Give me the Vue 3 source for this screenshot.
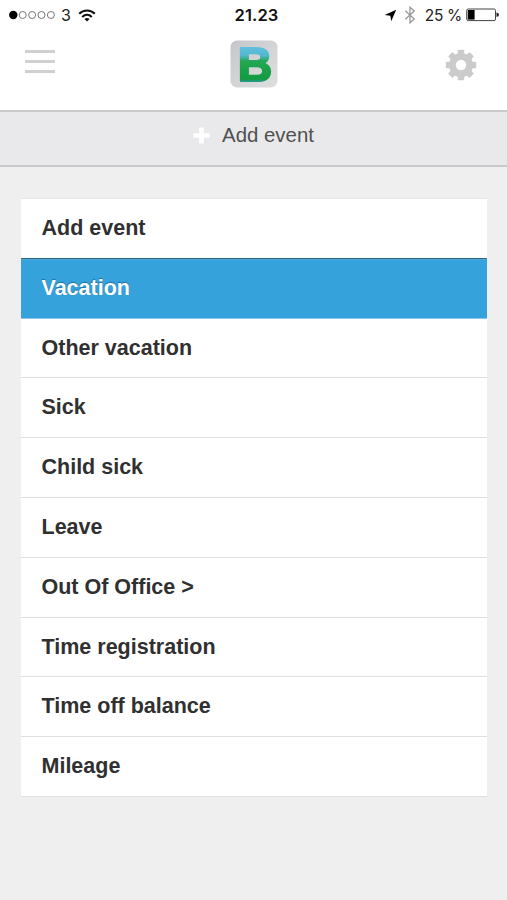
<template>
  <div class="screen">
    <div class="status-bar">
      <div class="status-left">
        <svg class="signal" width="46" height="10" viewBox="0 0 46 10">
          <circle cx="4.3" cy="5" r="4.2" fill="#000" />
          <circle v-for="n in 4" :key="n" :cx="4.3 + n * 9.4" cy="5" r="3.5" fill="none" stroke="#777" stroke-width="1" />
        </svg>
        <span class="carrier">3</span>
        <svg class="wifi" width="18" height="13" viewBox="0 0 18 13" fill="none" stroke="#111" stroke-width="2.1">
          <path d="M1.2 4.8 C5.5 0.3 12.5 0.3 16.8 4.8" />
          <path d="M4.2 8 C7 5.2 11 5.2 13.8 8" />
          <path d="M9 12.6 L6.4 9.9 Q9 7.9 11.6 9.9 Z" fill="#111" stroke="none" />
        </svg>
      </div>
      <span class="clock">21.23</span>
      <div class="status-right">
        <svg class="location" width="13" height="13" viewBox="0 0 13 13">
          <path d="M12.2 0.8 L7.2 12.2 L6.4 6.7 L0.7 5.9 Z" fill="#000" />
        </svg>
        <svg class="bluetooth" width="12" height="18" viewBox="0 0 12 18" fill="none" stroke="#999" stroke-width="1.3">
          <path d="M1.3 4.8 L10.2 13 L6 16.8 V1.2 L10.2 5 L1.3 13.2" />
        </svg>
        <span class="percent">25 %</span>
        <svg class="battery" width="33" height="14" viewBox="0 0 33 14">
          <rect x="0.7" y="1" width="28.8" height="11.6" rx="1.5" fill="#fff" stroke="#444" stroke-width="1" />
          <rect x="1.8" y="2" width="6.8" height="9.6" fill="#000" />
          <path d="M30.5 4.5 Q33 5 33 6.8 Q33 8.6 30.5 9.1 Z" fill="#222" />
        </svg>
      </div>
    </div>

    <div class="header">
      <div class="menu-icon">
        <span></span>
        <span></span>
        <span></span>
      </div>
      <svg class="logo" width="48" height="48" viewBox="0 0 48 48">
        <defs>
          <linearGradient id="tile" x1="0" y1="0" x2="1" y2="1">
            <stop offset="0" stop-color="#c5c6c9" />
            <stop offset="0.5" stop-color="#d3d4d6" />
            <stop offset="1" stop-color="#dedede" />
          </linearGradient>
          <linearGradient id="letter" gradientUnits="userSpaceOnUse" x1="0" y1="5" x2="0" y2="43">
            <stop offset="0" stop-color="#66c1e4" />
            <stop offset="0.28" stop-color="#52b8cd" />
            <stop offset="0.42" stop-color="#23a754" />
            <stop offset="0.9" stop-color="#129b40" />
            <stop offset="1" stop-color="#3398bb" />
          </linearGradient>
        </defs>
        <rect x="0.5" y="0.5" width="47" height="47" rx="6.5" fill="url(#tile)" />
        <text x="7.8" y="41" textLength="34.5" lengthAdjust="spacingAndGlyphs" fill="url(#letter)" stroke="url(#letter)">B</text>
      </svg>
      <svg class="gear" width="32" height="32" viewBox="-16 -16 32 32">
        <rect v-for="n in 8" :key="n" x="-3.2" y="-15.2" width="6.4" height="7" rx="0.8" :transform="`rotate(${n * 45})`" fill="#cbcbcb" />
        <circle r="8.6" fill="none" stroke="#cbcbcb" stroke-width="6.8" />
      </svg>
    </div>

    <div class="title-bar">
      <svg class="plus" width="17" height="17" viewBox="0 0 17 17">
        <path d="M6.2 0.5 H10.8 V6.2 H16.5 V10.8 H10.8 V16.5 H6.2 V10.8 H0.5 V6.2 H6.2 Z" fill="#fff" />
      </svg>
      <span>Add event</span>
    </div>

    <ul class="list">
      <li v-for="item in items" :key="item" :class="{ active: item === selected }" @click="selected = item">{{ item }}</li>
    </ul>
  </div>
</template>

<script setup>
import { ref } from 'vue'

const selected = ref('Vacation')

const items = [
  'Add event',
  'Vacation',
  'Other vacation',
  'Sick',
  'Child sick',
  'Leave',
  'Out Of Office >',
  'Time registration',
  'Time off balance',
  'Mileage'
]
</script>

<style>
body {
  margin: 0;
  background: #efefef;
}
</style>

<style scoped>
.screen {
  width: 507px;
  height: 900px;
  overflow: hidden;
  background: #efefef;
  font-family: "Liberation Sans", Arial, sans-serif;
  color: #333;
}

.status-bar {
  display: grid;
  grid-template-columns: 1fr auto 1fr;
  align-items: center;
  height: 30px;
  padding: 0 8px 0 9px;
  background: #fff;
  color: #222;
  font-family: Inter, sans-serif;
  font-size: 16px;
}

.status-left,
.status-right {
  display: flex;
  align-items: center;
}

.status-right {
  justify-content: flex-end;
}

.carrier {
  margin: 0 7px 0 6px;
}

.clock {
  margin-left: 5px;
  color: #111;
  font-size: 16.5px;
  font-weight: 600;
  letter-spacing: 0.1px;
}

.bluetooth {
  margin: 0 9px 0 7px;
}

.percent {
  margin-right: 4px;
  font-size: 15.5px;
  letter-spacing: -0.3px;
  white-space: nowrap;
}

.header {
  display: flex;
  justify-content: space-between;
  align-items: flex-start;
  box-sizing: border-box;
  height: 80px;
  padding: 10px 30px 0 25px;
  background: #fff;
}

.menu-icon {
  display: flex;
  flex-direction: column;
  gap: 7px;
  width: 30px;
  padding-top: 10px;
}

.menu-icon span {
  height: 3px;
  background: #d0d0d0;
}

.logo {
  margin-left: 8px;
  overflow: visible;
}

.logo text {
  font-family: "Liberation Sans", Arial, sans-serif;
  font-size: 49px;
  font-weight: bold;
  stroke-width: 2.2px;
  stroke-linejoin: round;
}

.gear {
  margin-top: 9px;
}

.title-bar {
  display: flex;
  justify-content: center;
  align-items: center;
  gap: 12px;
  box-sizing: border-box;
  height: 57px;
  padding-bottom: 6px;
  border-top: 2px solid #c9c9ca;
  border-bottom: 2px solid #c9c9ca;
  background: #e9e9eb;
  color: #505050;
  font-size: 20.4px;
}

.list {
  margin: 31px 20px 0 21px;
  padding: 0;
  border-top: 1px solid #e6e6e6;
  list-style: none;
}

.list li {
  box-sizing: border-box;
  height: 59.8px;
  padding-left: 20.5px;
  border-bottom: 1px solid #dfdfdf;
  background: #fff;
  color: #303030;
  font-size: 21.5px;
  font-weight: bold;
  line-height: 59px;
}

.list li.active {
  border-bottom-color: #8cc9e8;
  background: #35a2dc;
  box-shadow: 0 -1px 0 #2b6785, inset 0 1px 0 #4fa9d8;
  color: #fff;
  text-shadow: 0 -1px 1px #25709b;
}
</style>
